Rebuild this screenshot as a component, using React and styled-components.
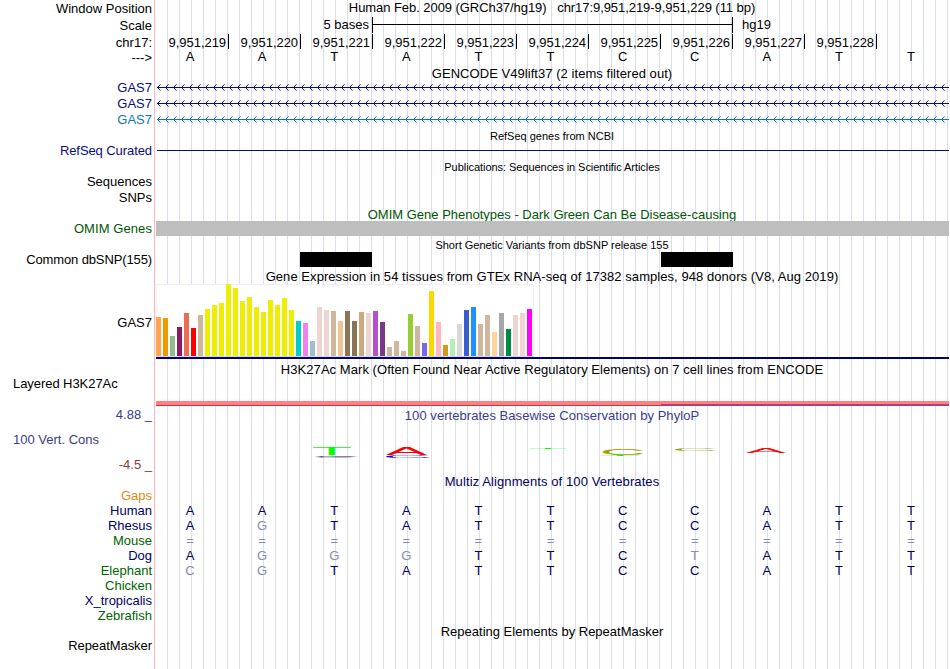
import React from 'react'
import styled, { createGlobalStyle } from 'styled-components'

const colors = {
  navy: '#0c0c78',
  blue: '#0c78b8',
  green: '#005800',
  alignNavy: '#000064',
  alignGreen: '#006400',
  mismatch: '#8888b4',
  phylo: '#3c3c8c',
  phyloNeg: '#823c3c',
  gaps: '#e08a10',
}

const positions = [219, 220, 221, 222, 223, 224, 225, 226, 227, 228]
const bases = 'AATATTCCATT'

// lowercase letters are bases that differ from human
const alignments = [
  { name: 'Gaps', color: colors.gaps, seq: '' },
  { name: 'Human', color: colors.alignNavy, seq: 'AATATTCCATT' },
  { name: 'Rhesus', color: colors.alignNavy, seq: 'AgTATTCCATT' },
  { name: 'Mouse', color: colors.alignGreen, seq: '===========' },
  { name: 'Dog', color: colors.alignNavy, seq: 'AgggTTCtATT' },
  { name: 'Elephant', color: colors.alignGreen, seq: 'cgTATTCCATT' },
  { name: 'Chicken', color: colors.alignGreen, seq: '' },
  { name: 'X_tropicalis', color: colors.alignNavy, seq: '' },
  { name: 'Zebrafish', color: colors.alignGreen, seq: '' },
]

const tissues = [
  [39, '#ffa54f'], [38, '#ee9a00'], [20, '#8fbc8f'], [29, '#8b1c62'], [43, '#ee6a50'], [28, '#ff0000'],
  [41, '#cdb79e'], [47, '#eeee00'], [51, '#eeee00'], [53, '#eeee00'], [72, '#eeee00'], [68, '#eeee00'],
  [55, '#eeee00'], [59, '#eeee00'], [49, '#eeee00'], [44, '#eeee00'], [56, '#eeee00'], [51, '#eeee00'],
  [58, '#eeee00'], [46, '#eeee00'], [35, '#00cdcd'], [33, '#ee82ee'], [15, '#9ac0cd'], [49, '#eed5d2'],
  [46, '#eed5d2'], [45, '#cdb79e'], [35, '#eec591'], [45, '#8b7355'], [35, '#8b7355'], [44, '#cdaa7d'],
  [43, '#eed5d2'], [45, '#b452cd'], [34, '#7a378b'], [9, '#cdb79e'], [15, '#cdb79e'], [5, '#cdb79e'],
  [42, '#9acd32'], [30, '#cdb79e'], [13, '#7a67ee'], [65, '#ffd700'], [34, '#ffb6c1'], [11, '#cd9b1d'],
  [17, '#b4eeb4'], [32, '#d9d9d9'], [46, '#3a5fcd'], [49, '#1e90ff'], [32, '#cdb79e'], [41, '#cdb79e'],
  [24, '#ffd39b'], [43, '#a6a6a6'], [27, '#008b45'], [41, '#eed5d2'], [43, '#eed5d2'], [47, '#ff00ff'],
]

// letter, left, top, width, height, fill
const logo = [
  ['T', 313, 448, 38, 7, '#00ff00'],
  ['C', 316, 456.4, 39, 1.4, '#a0a000'],
  ['C', 315, 455.4, 43, 1.6, '#0000ff'],
  ['A', 386, 448, 41, 7, '#ff0000'],
  ['C', 386, 455.2, 44, 2.6, '#0000ff'],
  ['T', 529, 448, 38, 1, '#00ff00'],
  ['C', 603, 448.2, 41, 6.6, '#a0a000'],
  ['T', 601, 455, 38, 1, '#00ff00'],
  ['C', 675, 448.1, 40, 2.8, '#a0a000'],
  ['A', 746, 448, 40, 4.8, '#ff0000'],
]

// ink boxes of the letters at font-size 100: left, width
const ink = { T: [2.1, 57], A: [0.4, 66], C: [5, 64] }

const Chevrons = ({ color }) => (
  <svg width="793" height="16">
    <path d="M1 7.5H793" stroke={color} />
    {Array.from({ length: 99 }, (_, i) => (
      <path key={i} d={`M${4.5 + i * 8} 4.3L${1.5 + i * 8} 7.5L${4.5 + i * 8} 10.7`} stroke={color} fill="none" />
    ))}
  </svg>
)

const Logo = () => (
  <svg width="793" height="42">
    {logo.map(([letter, x, y, w, h, fill], i) => {
      const sx = w / ink[letter][1]
      const sy = h / 69
      return (
        <LogoLetter
          key={i}
          fill={fill}
          transform={`translate(${x - 156 - ink[letter][0] * sx} ${y - 432 + h}) scale(${sx} ${sy})`}
        >
          {letter}
        </LogoLetter>
      )
    })}
  </svg>
)

const Track = ({ label, color, height, top = 0, spacing, children }) => (
  <Row $height={height}>
    <Label $color={color} $top={top} $spacing={spacing}>{label}</Label>
    <Lane>{children}</Lane>
  </Row>
)

const Sequence = ({ seq, match }) => (
  <Bases>
    {seq.split('').map((b, i) => (
      <Base key={i} $color={b === b.toUpperCase() && b !== '=' ? match : colors.mismatch}>{b.toUpperCase()}</Base>
    ))}
  </Bases>
)

const App = () => {
  return (
    <Browser>
      <GlobalStyle />
      <Track label="Window Position" height={17} top={1}>
        <Title $spacing={-0.06}>Human Feb. 2009 (GRCh37/hg19)&nbsp;&nbsp; chr17:9,951,219-9,951,229 (11 bp)</Title>
      </Track>
      <Track label="Scale" height={17} top={1}>
        <ScaleLine>
          <ScaleText>5 bases</ScaleText>
          <ScaleBar />
          <span>hg19</span>
        </ScaleLine>
      </Track>
      <Track label="chr17:" height={15} top={1}>
        <Ruler>
          {positions.map((p) => <Tick key={p}>9,951,{p}</Tick>)}
        </Ruler>
      </Track>
      <Track label="--->" height={17} top={1}>
        <Sequence seq={bases} match="#000" />
      </Track>

      <Track height={14}><Title $spacing={0.05}>GENCODE V49lift37 (2 items filtered out)</Title></Track>
      <Track label="GAS7" color={colors.navy} height={16}><Chevrons color={colors.navy} /></Track>
      <Track label="GAS7" color={colors.navy} height={16}><Chevrons color={colors.navy} /></Track>
      <Track label="GAS7" color={colors.blue} height={16}><Chevrons color={colors.blue} /></Track>

      <Track height={15}><Title $small $top={1}>RefSeq genes from NCBI</Title></Track>
      <Track label="RefSeq Curated" color={colors.navy} height={16} spacing={-0.08}><GeneLine /></Track>

      <Track height={15}><Title $small $top={1} $spacing={-0.05}>Publications: Sequences in Scientific Articles</Title></Track>
      <Track label="Sequences" height={16} />
      <Track label="SNPs" height={17} />

      <Track height={14}><Title $color={colors.green}>OMIM Gene Phenotypes - Dark Green Can Be Disease-causing</Title></Track>
      <Track label="OMIM Genes" color={colors.green} height={15} spacing={0.08}><OmimBar /></Track>

      <Track height={16}><Title $small $top={2}>Short Genetic Variants from dbSNP release 155</Title></Track>
      <Track label="Common dbSNP(155)" height={17} spacing={-0.12}>
        <Variants>
          <Variant />
          <Variant />
        </Variants>
      </Track>

      <Track height={15}><Title $spacing={0.06}>Gene Expression in 54 tissues from GTEx RNA-seq of 17382 samples, 948 donors (V8, Aug 2019)</Title></Track>
      <Track label="GAS7" height={75} top={31}>
        <Chart>
          {tissues.map(([value, color], i) => <Bar key={i} $value={value} $color={color} />)}
        </Chart>
        <ChartBase />
      </Track>

      <Track height={17}><Title $top={3} $spacing={0.055}>H3K27Ac Mark (Often Found Near Active Regulatory Elements) on 7 cell lines from ENCODE</Title></Track>
      <Row $height={25}><Label $left $spacing={-0.06}>Layered H3K27Ac</Label></Row>
      <Track height={5}>
        <Signal><SignalOverlap /></Signal>
      </Track>

      <Track label="4.88 _" color={colors.phylo} height={26} top={1}>
        <Title $color={colors.phylo} $top={2} $spacing={0.05}>100 vertebrates Basewise Conservation by PhyloP</Title>
      </Track>
      <Row $height={42}>
        <div>
          <Label $left $color={colors.phylo}>100 Vert. Cons</Label>
          <Label $color={colors.phyloNeg} $top={10}>-4.5 _</Label>
        </div>
        <Lane><Logo /></Lane>
      </Row>

      <Track height={14}><Title $color={colors.alignNavy} $spacing={0.1}>Multiz Alignments of 100 Vertebrates</Title></Track>
      {alignments.map((a) => (
        <Track key={a.name} label={a.name} color={a.color} height={15}>
          <Sequence seq={a.seq} match={colors.alignNavy} />
        </Track>
      ))}

      <Track height={15}><Title $top={1}>Repeating Elements by RepeatMasker</Title></Track>
      <Track label="RepeatMasker" height={31} spacing={-0.06} />
    </Browser>
  )
}

const GlobalStyle = createGlobalStyle`
body {
  margin: 0;
  background: #fff;
}
`

const Browser = styled.div`
  width: 950px;
  height: 669px;
  overflow: hidden;
  font: 13px/15px 'Liberation Sans', Arial, sans-serif;
  color: #000;
  white-space: nowrap;
  background:
    linear-gradient(#ffb4b4, #ffb4b4) 154px 0 / 1px 100% no-repeat,
    repeating-linear-gradient(to right, #dcdcf5 0 1px, transparent 1px 12px) 167px 0 / 782px 100% no-repeat;
`

const Row = styled.div`
  display: grid;
  grid-template-columns: 152px 793px;
  column-gap: 4px;
  height: ${({ $height }) => $height}px;
`

const Label = styled.div`
  padding-top: ${({ $top = 0 }) => $top}px;
  padding-left: ${({ $left }) => ($left ? '13px' : 0)};
  text-align: ${({ $left }) => ($left ? 'left' : 'right')};
  letter-spacing: ${({ $spacing = 0 }) => $spacing}px;
  color: ${({ $color }) => $color || '#000'};
`

const Lane = styled.div`
  min-width: 0;
  svg {
    display: block;
  }
`

const Title = styled.div`
  padding-top: ${({ $top = 0 }) => $top}px;
  padding-right: 1px;
  text-align: center;
  font-size: ${({ $small }) => ($small ? '11px' : '13px')};
  letter-spacing: ${({ $spacing = 0 }) => $spacing}px;
  color: ${({ $color }) => $color || '#000'};
`

const ScaleLine = styled.div`
  display: flex;
`

const ScaleText = styled.span`
  width: 213px;
  margin-right: 3px;
  text-align: right;
`

const ScaleBar = styled.div`
  width: 359px;
  height: 16px;
  margin-right: 9px;
  border: solid #000;
  border-width: 0 1px;
  background: linear-gradient(#000, #000) 0 7px / 100% 1px no-repeat;
`

const Ruler = styled.div`
  display: grid;
  grid-template-columns: 73px repeat(9, 72px);
`

const Tick = styled.div`
  height: 15px;
  line-height: 17px;
  padding-right: 2px;
  border-right: 1px solid #000;
  text-align: right;
  letter-spacing: -0.05px;
`

const Bases = styled.div`
  display: grid;
  grid-template-columns: repeat(11, 1fr);
  margin: 0 2px 0 -2px;
`

const Base = styled.span`
  text-align: center;
  color: ${({ $color }) => $color};
`

const GeneLine = styled.div`
  height: 1px;
  margin: 7px 0 0 1px;
  background: ${colors.navy};
`

const OmimBar = styled.div`
  height: 15px;
  background: #bebebe;
`

const Variants = styled.div`
  display: flex;
  gap: 289px;
  padding-left: 144px;
`

const Variant = styled.div`
  width: 72px;
  height: 15px;
  background: #000;
`

const Chart = styled.div`
  display: flex;
  align-items: flex-end;
  gap: 2px;
  box-sizing: border-box;
  width: 378px;
  height: 73px;
  background: #fff;
  box-shadow: inset 0 1px #f0f0f0, inset 1px 0 #f0f0f0, inset -1px 0 #f0f0f0;
  border-bottom: 1px solid #dcdcdc;
`

const Bar = styled.div`
  flex: none;
  width: 5px;
  height: ${({ $value }) => $value}px;
  background: ${({ $color }) => $color};
`

const ChartBase = styled.div`
  height: 2px;
  background: #000078;
`

const Signal = styled.div`
  display: flex;
  justify-content: flex-end;
  align-items: flex-end;
  height: 5px;
  background: linear-gradient(#ff8080 4px, #d22f45 4px);
`

const SignalOverlap = styled.div`
  width: 288px;
  height: 2px;
  background: linear-gradient(#b04088 1px, #d03060 1px);
`

const LogoLetter = styled.text`
  font-size: 100px;
`

export default App
